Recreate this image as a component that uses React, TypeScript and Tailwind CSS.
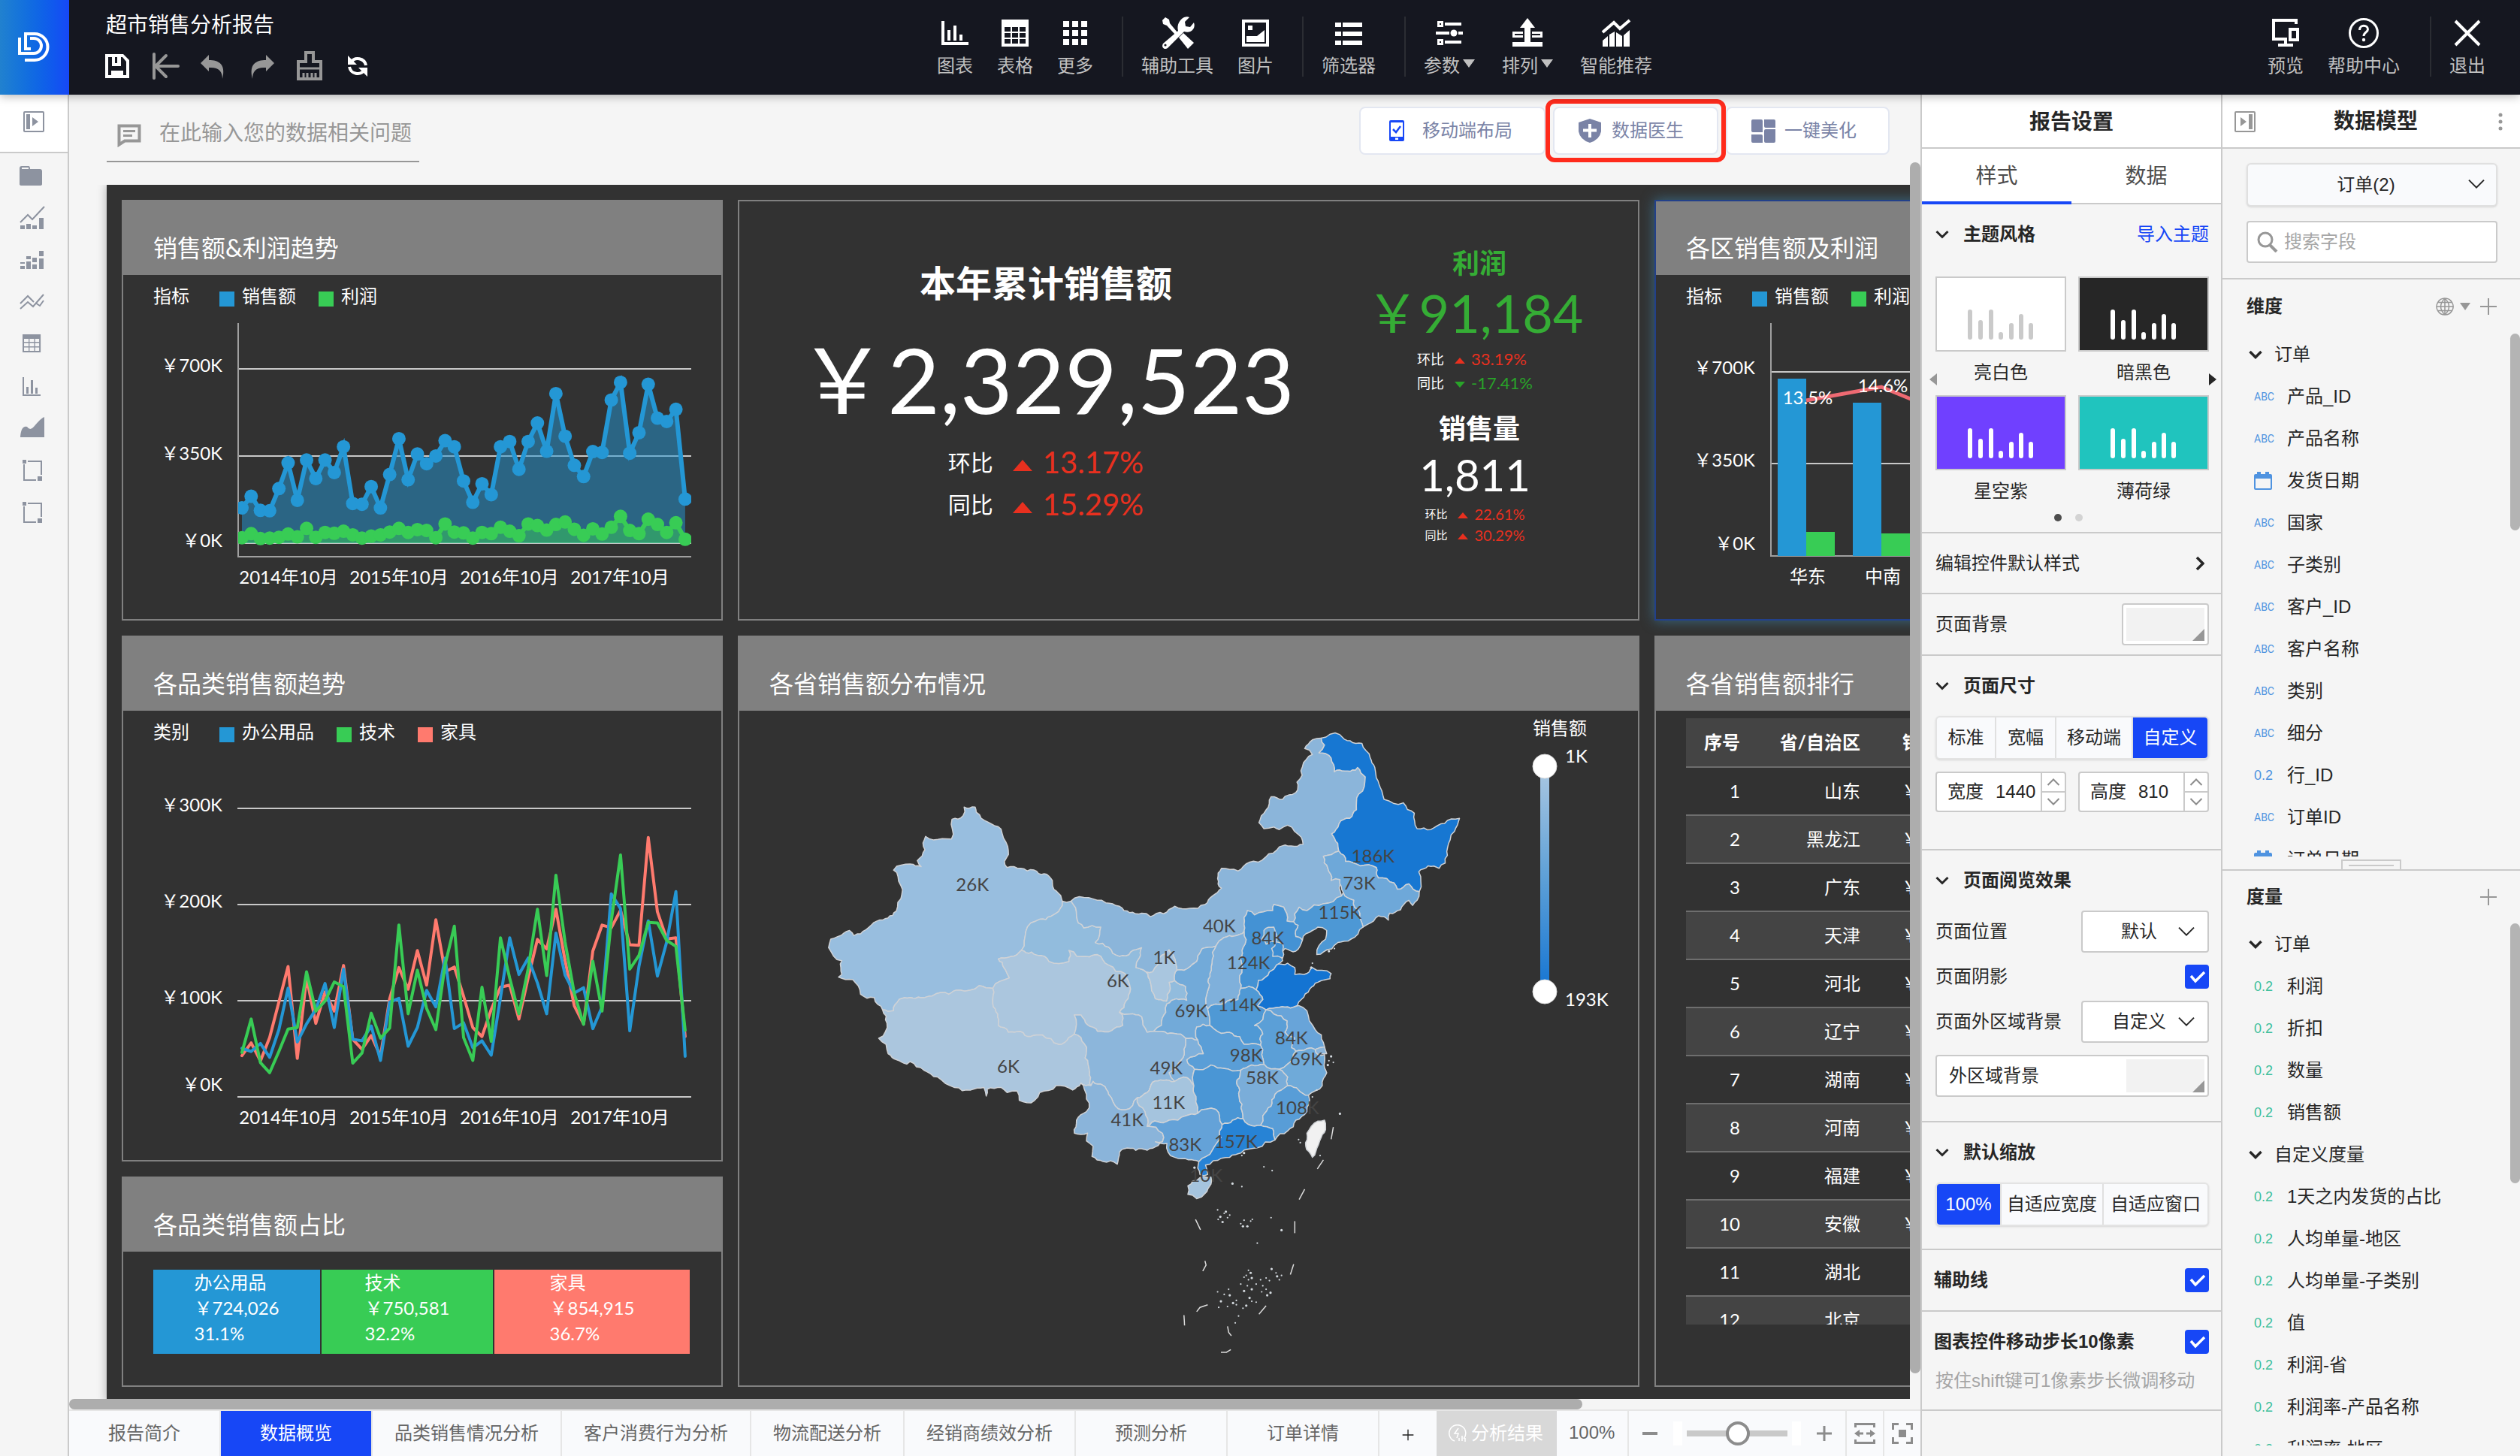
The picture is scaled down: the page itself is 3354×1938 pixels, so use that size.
import { useState, type ReactNode } from 'react';
import clsx from 'clsx';

type Point = [number, number];

/* ---------- icons ---------- */

interface IconProps {
  children: ReactNode;
  className?: string;
  box?: string;
}

function Icon({ children, className = 'size-9', box = '0 0 36 36' }: IconProps) {
  return (
    <svg viewBox={box} className={clsx('shrink-0', className)} fill="currentColor" aria-hidden="true">
      {children}
    </svg>
  );
}

const stroke = (width: number) => ({ fill: 'none', stroke: 'currentColor', strokeWidth: width });

function Chevron({ className = 'w-[18px] h-3', width = 3 }: { className?: string; width?: number }) {
  return (
    <Icon className={className} box="0 0 18 12">
      <path d="M1.5 2 9 9.5 16.5 2" {...stroke(width)} />
    </Icon>
  );
}

const tableIcon = (
  <path fillRule="evenodd" d="M0 0h36v36H0zM4 10v6h8v-6zM14 10v6h8v-6zM24 10v6h8v-6zM4 18v6h8v-6zM14 18v6h8v-6zM24 18v6h8v-6zM4 26v6h8v-6zM14 26v6h8v-6zM24 26v6h8v-6z" />
);

const chartIcon = <path d="M0 2h4v28h32v4H0zM8 14h4v14H8zM16 8h4v20h-4zM24 20h4v8h-4z" />;

const frameIcon = (
  <>
    <path d="M7 10v21h16M12 6h18v18" {...stroke(2)} />
    <path d="M5 4h5v5H5zM25 26h6v6h-6z" />
  </>
);

const plusIcon = <path d="M1 12h22M12 1v22" {...stroke(2)} />;

/* ---------- header ---------- */

const historyTools = [
  {
    label: '保存',
    white: true,
    icon: <path fillRule="evenodd" d="M2 2h24l8 8v24H2zM6 6v24h4v-6h16v6h4V12l-5-6h-2v12H11V6zM15 6v8h3V6z" />,
  },
  { label: '重置', icon: <path d="M3 2v32M19 4 5 18l14 14M5 18h30" {...stroke(4)} strokeLinecap="round" /> },
  { label: '撤销', icon: <path d="M1 14 12 3v7c13 0 23 5 18 25 0-10-5-16-18-15v5z" /> },
  { label: '重做', icon: <path d="M35 14 24 3v7C11 10 1 15 6 35c0-10 5-16 18-15v5z" /> },
  {
    label: '清除',
    icon: (
      <>
        <path d="M13 0h10v12h10v23H3V12h10z" {...stroke(4)} />
        <path d="M3 21h30M10 27v8M15 27v8M21 27v8M26 27v8" {...stroke(3)} />
      </>
    ),
  },
  {
    label: '刷新',
    white: true,
    icon: (
      <>
        <path d="M9 13a11 11 0 0 1 20 4M27 23A11 11 0 0 1 7 19" {...stroke(4)} />
        <path d="M5 4v12h12zM31 32V20H19z" />
      </>
    ),
  },
];

const toolGroups = [
  [
    { label: '图表', icon: chartIcon },
    { label: '表格', icon: tableIcon },
    {
      label: '更多',
      icon: (
        <path d="M2 2h8v8H2zM14 2h8v8h-8zM26 2h8v8h-8zM2 14h8v8H2zM14 14h8v8h-8zM26 14h8v8h-8zM2 26h8v8H2zM14 26h8v8h-8zM26 26h8v8h-8z" />
      ),
    },
  ],
  [
    {
      label: '辅助工具',
      icon: (
        <>
          <path d="M-2 1 2-3 7 0l1 5 10 12-3 3L4 8-1 6z" />
          <path d="M20 24l6-6 14 13-8 8z" />
          <path d="M27-3c3-1 5-1 7 0l-6 6 1 6 6 1 5-6c3 8-4 15-13 12L5 38c-4 3-9-1-6-6l20-17c-2-8 2-15 8-18z" />
          <circle cx="2" cy="34" r="1.6" fill="#151720" />
        </>
      ),
    },
    {
      label: '图片',
      icon: <path fillRule="evenodd" d="M0 0h36v36H0zM4 4v28h28V4zM8 8h6v6H8zM6 22h14l10-8v16H6z" />,
    },
  ],
  [
    {
      label: '筛选器',
      icon: <path d="M0 4h8v6H0zM10 4h26v6H10zM0 16h8v6H0zM10 16h26v6H10zM0 28h8v6H0zM10 28h26v6H10z" />,
    },
  ],
  [
    {
      label: '参数',
      menu: true,
      icon: (
        <>
          <path d="M3.500 3.500h5v5h-5zM3.500 27.500h5v5h-5z" {...stroke(3)} />
          <path d="M12 4h22v4H12zM12 28h22v4H12zM0 16h18v4H0zM30 16h6v4h-6z" />
          <circle cx="24" cy="18" r="4.500" />
        </>
      ),
    },
    {
      label: '排列',
      menu: true,
      icon: <path fillRule="evenodd" d="M18-2 28 11h-6v19h16v6H-2v-6h16V11H8zM-2 16h14v8H-2zM1 19v2h11v-2zM24 16h14v8H24zM24 19v2h11v-2z" />,
    },
    {
      label: '智能推荐',
      icon: (
        <>
          <path d="M0 17 15 4l8 8L36 1" {...stroke(4)} />
          <path d="M0 28l7-6v14H0zM9 20l7-4v20H9zM18 17l8 5v14h-8zM28 21l8-7v22h-8z" />
        </>
      ),
    },
  ],
];

function ToolButton({ label, icon, menu }: { label: string; icon: ReactNode; menu?: boolean }) {
  return (
    <button type="button" className="flex flex-col items-center gap-2 text-2xl leading-9">
      <Icon className="size-9 overflow-visible text-white">{icon}</Icon>
      <span className="flex gap-1">
        {label}
        {menu && (
          <Icon className="mt-2 h-3 w-4" box="0 0 16 12">
            <path d="M0 1h16L8 12z" />
          </Icon>
        )}
      </span>
    </button>
  );
}

function Header() {
  return (
    <header className="z-20 flex h-[126px] shrink-0 bg-[#151720] text-[#c0c0c0] shadow-[0_2px_12px_rgba(0,0,0,0.3)]">
      <a href="#home" aria-label="首页" className="grid w-[92px] place-items-center bg-linear-to-r from-[#2181cf] to-[#1747f6] text-white">
        <Icon className="mr-1 size-11" box="0 0 44 44">
          <path d="M4 9v21h19a10 10 0 0 0 0-20h-5M12 26V4h12a17.500 17.500 0 0 1 0 35H11M10 24h9" {...stroke(4)} />
        </Icon>
      </a>
      <div className="grid flex-1 grid-cols-[1fr_auto_1fr]">
        <div className="pt-3.5 pl-[46px]">
          <h1 className="pl-[3px] text-[28px] leading-10 text-white">超市销售分析报告</h1>
          <div className="mt-4 flex gap-7">
            {historyTools.map((tool) => (
              <button key={tool.label} type="button" aria-label={tool.label} className={tool.white ? 'text-white' : 'text-[#979797]'}>
                <Icon className="size-9 overflow-visible">{tool.icon}</Icon>
              </button>
            ))}
          </div>
        </div>
        <nav className="flex pt-[22px]">
          {toolGroups.map((group, i) => (
            <div
              key={i}
              className={clsx(
                'flex h-20 pt-1',
                i === 3 ? 'gap-9' : 'gap-8 border-r-2 border-[#2b2d33] pr-[38px]',
                i > 0 && 'pl-6',
              )}
            >
              {group.map((tool) => (
                <ToolButton key={tool.label} {...tool} />
              ))}
            </div>
          ))}
        </nav>
        <div className="flex justify-end gap-8 pt-[22px] pr-[46px]">
          <div className="flex h-20 gap-8 border-r-2 border-[#2b2d33] pt-1 pr-10">
            <ToolButton
              label="预览"
              icon={
                <>
                  <path d="M32 6V1H2v25h18M18 26v8M8 34h20" {...stroke(4)} />
                  <path d="M24 13h10v14H24z" {...stroke(4)} />
                </>
              }
            />
            <ToolButton
              label="帮助中心"
              icon={
                <>
                  <circle cx="18" cy="18" r="18.500" {...stroke(3)} />
                  <path d="M12.500 14c0-8 11-7 11-1 0 4-5.500 4-5.500 9" {...stroke(3)} />
                  <circle cx="18" cy="27" r="2.200" />
                </>
              }
            />
          </div>
          <div className="-ml-2 pt-1">
            <ToolButton label="退出" icon={<path d="M2 2l32 32M34 2 2 34" {...stroke(4)} />} />
          </div>
        </div>
      </div>
    </header>
  );
}

/* ---------- left rail ---------- */

const railItems = [
  { label: '文件夹', icon: <path fillRule="evenodd" d="M1 8q0-3 3-3h9q2 0 2 4h13q3 0 3 3v17q0 2-3 2H4q-3 0-3-2zM4 7v2h9V7z" /> },
  {
    label: '组合图',
    icon: (
      <>
        <path d="M2 24 12 14l6 6L34 3" {...stroke(2)} />
        <path d="M2 28h6v5H2zM10 26h6v7h-6zM18 28h6v5h-6zM27 18h6v15h-6z" />
      </>
    ),
  },
  { label: '堆积图', icon: <path d="M2 21h6v2H2zM2 26h6v4H2zM10 13h6v4h-6zM10 20h6v10h-6zM18 15h6v6h-6zM18 24h6v6h-6zM27 6h6v7h-6zM27 16h6v14h-6z" /> },
  { label: '折线图', icon: <path d="M2 20 12 10l8 8M2 27l10-9 7 6L33 8M22 19l6 4 5-7" {...stroke(2)} /> },
  {
    label: '表格',
    icon: (
      <g transform="translate(5 5) scale(.67)">
        <path fillRule="evenodd" d="M0 0h36v36H0zM3 9v6h9v-6zM14 9v6h9v-6zM25 9v6h8v-6zM3 17v7h9v-7zM14 17v7h9v-7zM25 17v7h8v-7zM3 26v7h9v-7zM14 26v7h9v-7zM25 26v7h8v-7z" />
      </g>
    ),
  },
  { label: '柱图', icon: <path d="M5 6h2v23h22v2H5zM10 19h3v9h-3zM16 10h3v18h-3zM22 20h3v8h-3z" /> },
  { label: '面积图', icon: <path d="M2 30q1-16 9-14 4 6 9 0Q30 4 34 3v27z" /> },
  { label: '容器', icon: frameIcon },
  { label: '选择框', icon: frameIcon },
];

function PanelToggle({ side }: { side: 'left' | 'right' }) {
  return (
    <Icon className="size-7" box="0 0 28 28">
      <rect x="1" y="1" width="26" height="26" rx="1" {...stroke(2)} />
      <path d={side === 'left' ? 'M4 4h5v20H4zM12 8l8 6-8 6z' : 'M19 4h5v20h-5zM8 8l8 6-8 6z'} />
    </Icon>
  );
}

function Rail() {
  return (
    <aside className="flex w-[92px] shrink-0 flex-col border-r-2 border-[#cacaca] text-[#8d93a0]">
      <button type="button" aria-label="展开侧栏" className="grid h-[78px] place-items-center border-b-2 border-[#cacaca] bg-white pb-1">
        <PanelToggle side="left" />
      </button>
      {railItems.map((item) => (
        <button key={item.label} type="button" aria-label={item.label} className="grid h-14 place-items-center pt-1 pr-1">
          <Icon>{item.icon}</Icon>
        </button>
      ))}
    </aside>
  );
}

/* ---------- canvas widgets ---------- */

function Widget({ title, selected, className, children }: { title?: string; selected?: boolean; className: string; children: ReactNode }) {
  return (
    <section
      className={clsx(
        'overflow-hidden border-2',
        selected ? 'border-[#22408a] shadow-[0_0_16px_rgba(60,120,150,0.8)]' : 'border-[#808080]',
        className,
      )}
    >
      {title && <h2 className="h-[98px] bg-[#808080] pt-[42px] pl-10 text-[32px] leading-10">{title}</h2>}
      {children}
    </section>
  );
}

function Legend({ name, items }: { name: string; items: { label: string; color: string }[] }) {
  return (
    <div className="mt-2.5 mb-0.5 flex h-9 items-center gap-[30px] pl-10 text-2xl leading-9">
      <span className="mr-2.5">{name}</span>
      {items.map((item) => (
        <span key={item.label} className="flex items-center gap-2.5">
          <i className={clsx('mt-2 size-5', item.color)} />
          {item.label}
        </span>
      ))}
    </div>
  );
}

const BLUE = '#2497d5';
const GREEN = '#38cc55';
const RED = '#ff7a6e';

const salesY = [
  1262, 1233, 1268, 1269, 1214, 1150, 1243, 1143, 1189, 1143, 1174, 1110, 1251, 1253, 1209, 1262, 1179, 1090, 1192, 1128, 1152, 1133,
  1095, 1110, 1195, 1248, 1202, 1229, 1110, 1097, 1166, 1097, 1051, 1121, 978, 1084, 1156, 1184, 1122, 1124, 994, 950, 1126, 1075, 955,
  1039, 1047, 1017, 1240,
];
const profitY = [
  1336, 1326, 1338, 1337, 1335, 1327, 1334, 1313, 1335, 1323, 1325, 1320, 1329, 1337, 1332, 1329, 1322, 1313, 1323, 1316, 1318, 1336,
  1302, 1322, 1324, 1337, 1323, 1326, 1310, 1320, 1331, 1302, 1306, 1317, 1303, 1297, 1315, 1330, 1314, 1327, 1310, 1283, 1318, 1326,
  1290, 1303, 1323, 1299, 1340,
];
const officeY = [
  800, 806, 791, 817, 765, 687, 788, 754, 727, 678, 761, 651, 783, 786, 758, 823, 713, 706, 796, 761, 691, 722, 630, 763, 752, 799, 786,
  813, 705, 592, 661, 630, 677, 735, 583, 662, 696, 686, 763, 722, 509, 537, 767, 645, 560, 664, 600, 505, 815,
];
const furnitureY = [
  814, 790, 824, 780, 713, 646, 819, 667, 753, 694, 730, 644, 783, 802, 776, 815, 707, 648, 689, 616, 681, 558, 656, 647, 702, 761, 778,
  727, 685, 681, 745, 667, 595, 613, 538, 635, 720, 754, 617, 568, 573, 540, 605, 606, 403, 543, 594, 592, 778,
];
const techY = [
  808, 745, 827, 846, 806, 764, 761, 656, 730, 711, 675, 684, 828, 809, 734, 781, 762, 568, 735, 653, 725, 765, 643, 570, 780, 823, 685,
  787, 592, 668, 735, 650, 538, 663, 474, 600, 697, 755, 636, 730, 560, 436, 651, 625, 563, 564, 597, 608, 766,
];

// month index and plot height -> chart coordinates
const toPoints = (ys: number[], scale: number, offset: number): Point[] =>
  ys.map((y, i) => [158 + i * 12.29, y * scale + offset]);

const join = (points: Point[]) => points.map(([x, y]) => `${x.toFixed(1)},${y.toFixed(1)}`).join(' ');

const YEARS = [
  { label: '2014年10月', x: 220 },
  { label: '2015年10月', x: 367 },
  { label: '2016年10月', x: 514 },
  { label: '2017年10月', x: 661 },
];

function AxisLabels({ ticks, baseline }: { ticks: { label: string; y: number }[]; baseline: number }) {
  return (
    <g fill="#fff" fontSize="24">
      {ticks.map((t) => (
        <text key={t.label} x="132" y={t.y} textAnchor="end">
          {t.label}
        </text>
      ))}
      {YEARS.map((t) => (
        <text key={t.label} x={t.x} y={baseline} textAnchor="middle">
          {t.label}
        </text>
      ))}
    </g>
  );
}

function TrendChart() {
  const sales = toPoints(salesY, 0.5357, -366);
  const profit = toPoints(profitY, 0.5357, -366);
  return (
    <svg viewBox="0 48 796 410" className="h-[410px] w-[796px]">
      <clipPath id="trend-plot">
        <rect x="153" y="60" width="603" height="320" />
      </clipPath>
      <path d="M152 125h604M152 241h604M152 357h604" stroke="#c8c8c8" strokeWidth="2" />
      <path d="M153 64v311h603" stroke="#a0a0a0" strokeWidth="2" fill="none" />
      <g clipPath="url(#trend-plot)">
        <polygon points={`158,357 ${join(sales)} 748,357`} fill={BLUE} fillOpacity="0.5" />
        <polyline points={join(sales)} fill="none" stroke={BLUE} strokeWidth="6" />
        {sales.map(([x, y]) => (
          <circle key={x} cx={x} cy={y} r="9" fill={BLUE} />
        ))}
        <polygon points={`158,357 ${join(profit)} 748,357`} fill={GREEN} fillOpacity="0.5" />
        <polyline points={join(profit)} fill="none" stroke={GREEN} strokeWidth="6" />
        {profit.map(([x, y]) => (
          <circle key={x} cx={x} cy={y} r="9" fill={GREEN} />
        ))}
      </g>
      <AxisLabels
        ticks={[
          { label: '￥700K', y: 129 },
          { label: '￥350K', y: 246 },
          { label: '￥0K', y: 362 },
        ]}
        baseline={411}
      />
    </svg>
  );
}

function CategoryChart() {
  return (
    <svg viewBox="0 48 796 550" className="h-[550px] w-[796px]">
      <path d="M152 130h604M152 258h604M152 386h604M152 514h604" stroke="#c8c8c8" strokeWidth="2" />
      <g fill="none" strokeWidth="4" strokeLinejoin="round" strokeLinecap="round">
        <polyline points={join(toPoints(furnitureY, 0.7066, -116))} stroke={RED} />
        <polyline points={join(toPoints(officeY, 0.7066, -116))} stroke={BLUE} />
        <polyline points={join(toPoints(techY, 0.7066, -116))} stroke={GREEN} />
      </g>
      <AxisLabels
        ticks={[
          { label: '￥300K', y: 134 },
          { label: '￥200K', y: 262 },
          { label: '￥100K', y: 390 },
          { label: '￥0K', y: 506 },
        ]}
        baseline={550}
      />
    </svg>
  );
}

const regions = [
  { label: '华东', x: 162, sales: 504, profit: 708 },
  { label: '中南', x: 262, sales: 536, profit: 710 },
];

function RegionChart() {
  return (
    <svg viewBox="0 48 796 410" className="h-[410px] w-[796px]">
      <path d="M153 129h604M153 251h604" stroke="#c8c8c8" strokeWidth="2" />
      <path d="M153 64v310h603" stroke="#a0a0a0" strokeWidth="2" fill="none" />
      {regions.map((r) => (
        <g key={r.label}>
          <rect x={r.x} y={r.sales - 366} width="38" height={740 - r.sales} fill={BLUE} />
          <rect x={r.x + 38} y={r.profit - 366} width="38" height={740 - r.profit} fill={GREEN} />
          <text x={r.x + 40} y="410" fill="#fff" fontSize="24" textAnchor="middle">
            {r.label}
          </text>
        </g>
      ))}
      <polyline points="200,167 300,149 400,190 500,140" fill="none" stroke="#ee6a72" strokeWidth="5" />
      <g fill="#fff" fontSize="24">
        <text x="202" y="172" textAnchor="middle">13.5%</text>
        <text x="302" y="156" textAnchor="middle">14.6%</text>
        <text x="132" y="132" textAnchor="end">￥700K</text>
        <text x="132" y="255" textAnchor="end">￥350K</text>
        <text x="132" y="366" textAnchor="end">￥0K</text>
      </g>
    </svg>
  );
}

function Change({ label, value, size, down }: { label: string; value: string; size: 'lg' | 'md' | 'sm'; down?: boolean }) {
  return (
    <div
      className={clsx(
        'flex items-center',
        size === 'lg' && 'h-14 text-[40px] leading-[56px]',
        size === 'md' && 'h-8 text-[22px] leading-8',
        size === 'sm' && 'h-7 text-xl leading-7',
      )}
    >
      <span
        className={clsx(
          size === 'lg' && 'mr-[26px] text-[30px]',
          size === 'md' && 'mr-3.5 text-lg',
          size === 'sm' && 'mr-3.5 text-[15px]',
        )}
      >
        {label}
      </span>
      <Icon
        className={clsx(
          down ? 'rotate-180 text-[#29a329]' : 'text-[#e8301f]',
          size === 'lg' ? 'mt-2 mr-3.5 h-[15px] w-[26px]' : 'mt-1 mr-2 h-2 w-3.5',
        )}
        box="0 0 26 15"
      >
        <path d="M13 0 26 15H0z" />
      </Icon>
      <span className={down ? 'text-[#29a329]' : 'text-[#e8301f]'}>{value}</span>
    </div>
  );
}

function KpiBoard() {
  return (
    <div className="flex pr-[42px] text-center">
      <div className="flex w-[816px] flex-col items-center pt-[79px]">
        <h2 className="text-5xl leading-[60px] font-semibold">本年累计销售额</h2>
        <p className="mt-7 text-[120px] leading-[140px]">￥2,329,523</p>
        <div className="mt-3">
          <Change label="环比" value="13.17%" size="lg" />
          <Change label="同比" value="15.29%" size="lg" />
        </div>
      </div>
      <div className="flex flex-1 flex-col items-center pt-[60px]">
        <h2 className="text-4xl leading-[44px] font-semibold text-[#35ad35]">利润</h2>
        <p className="mt-1 pr-3 text-[70px] leading-20 text-[#35ad35]">￥91,184</p>
        <div className="mt-1.5 pr-3">
          <Change label="环比" value="33.19%" size="md" />
          <Change label="同比" value="-17.41%" size="md" down />
        </div>
        <h2 className="mt-[22px] text-4xl leading-[44px] font-semibold">销售量</h2>
        <p className="mt-1 pr-3 text-[58px] leading-[72px]">1,811</p>
        <div className="mt-0.5 pr-3">
          <Change label="环比" value="22.61%" size="sm" />
          <Change label="同比" value="30.29%" size="sm" />
        </div>
      </div>
    </div>
  );
}

/* province outlines, drawn on a 1568 unit grid */
const provinces: { name: string; fill: string; d: string }[] = [
  {
    name: '新疆',
    fill: '#98bedf',
    d: '72,560 76,540 100,526 110,520 118,532 140,518 160,498 195,475 205,436 198,395 190,380 220,366 240,372 233,358 248,302 262,310 295,308 296,262 316,254 318,234 338,234 340,246 385,285 397,325 391,360 396,374 445,380 478,404 496,452 492,470 455,494 430,522 422,566 380,586 390,606 400,630 370,654 345,648 310,658 290,668 260,672 240,676 200,680 190,706 170,704 155,676 130,668 116,634 90,628 96,622 96,590',
  },
  {
    name: '西藏',
    fill: '#abc6de',
    d: '200,680 240,676 260,672 290,668 310,658 345,648 370,654 370,690 380,740 420,754 460,762 490,784 500,780 518,760 530,768 540,800 543,830 548,880 530,874 515,890 485,880 455,896 446,914 418,914 414,892 396,896 385,884 360,888 358,904 354,884 330,890 300,884 270,860 245,844 220,824 214,830 180,806 163,770 175,755 178,735 170,704 190,706',
  },
  {
    name: '青海',
    fill: '#abc6de',
    d: '380,586 422,566 440,570 464,580 472,592 508,592 508,566 540,580 560,576 580,600 610,620 620,656 600,710 606,740 586,752 560,754 530,716 518,716 518,760 500,780 490,784 460,762 420,754 380,740 370,690 370,654 400,630 390,606',
  },
  {
    name: '甘肃',
    fill: '#92bcdd',
    d: '492,470 496,452 512,452 522,486 535,514 566,512 564,530 556,548 600,580 640,560 636,584 630,606 648,616 656,640 665,678 685,684 692,655 690,640 700,636 720,650 722,682 686,690 684,710 676,740 662,754 650,756 640,720 618,714 600,710 620,656 610,620 580,600 560,576 540,580 508,566 508,592 472,592 464,580 440,570 422,566 430,522 455,494',
  },
  {
    name: '内蒙古',
    fill: '#8bb5da',
    d: '512,452 575,456 600,464 640,480 656,488 700,464 755,460 785,422 778,400 785,376 815,382 835,362 865,350 890,326 933,320 930,304 905,276 890,286 880,280 862,284 853,270 875,210 896,216 920,200 922,176 932,140 950,112 936,98 950,78 966,74 972,90 962,108 984,120 990,152 1028,148 1032,142 1046,164 1034,204 1030,240 1018,260 985,296 996,318 998,336 970,348 978,376 984,404 1000,402 1003,440 970,458 940,474 926,466 916,500 904,498 898,466 880,460 878,474 845,484 832,474 826,490 826,522 790,536 775,556 750,562 728,604 704,612 690,565 676,578 660,616 648,616 630,606 636,584 640,560 600,580 556,548 564,530 566,512 535,514 522,486',
  },
  {
    name: '黑龙江',
    fill: '#1777d2',
    d: '966,74 1000,66 1040,86 1055,120 1066,166 1076,196 1080,216 1115,224 1135,248 1140,284 1165,286 1190,272 1217,260 1208,290 1200,310 1195,346 1180,376 1160,370 1143,384 1144,430 1125,412 1104,424 1098,410 1070,398 1066,374 1010,360 998,336 996,318 985,296 1018,260 1030,240 1034,204 1046,164 1032,142 1028,148 990,152 984,120 962,108 972,90',
  },
  {
    name: '吉林',
    fill: '#6ea8d9',
    d: '970,348 998,336 1010,360 1066,374 1070,398 1098,410 1104,424 1125,412 1144,430 1140,450 1132,462 1125,450 1110,472 1090,480 1088,496 1070,486 1050,506 1042,512 1036,480 1025,450 1006,432 1000,402 984,404 978,376',
  },
  {
    name: '辽宁',
    fill: '#4d98d5',
    d: '1003,440 1006,432 1025,450 1036,480 1042,512 1020,540 996,548 970,570 958,576 974,540 976,520 960,512 950,520 932,542 920,534 924,508 916,500 926,466 940,474 970,458',
  },
  {
    name: '河北',
    fill: '#4492d4',
    d: '832,474 845,484 878,474 880,460 898,466 904,498 916,500 924,508 920,534 932,542 920,568 900,562 896,590 885,600 872,616 852,636 848,658 820,654 818,640 822,610 824,560 826,522 826,490',
  },
  { name: '北京', fill: '#68a5d9', d: '862,520 880,512 885,530 884,546 866,552 858,540' },
  { name: '天津', fill: '#3c8dd4', d: '884,546 896,550 896,584 878,580 876,562' },
  {
    name: '山东',
    fill: '#1474d2',
    d: '852,636 872,616 885,600 905,596 918,606 918,622 935,622 950,606 984,620 982,632 960,640 945,656 930,680 910,700 890,698 866,704 850,696 860,680 848,658',
  },
  { name: '山西', fill: '#7fb0db', d: '775,556 790,536 826,522 824,560 822,610 818,640 820,654 815,680 790,690 760,702 758,670 764,620' },
  {
    name: '陕西',
    fill: '#72aad9',
    d: '750,562 775,556 764,620 758,670 760,702 764,740 740,744 742,774 720,770 676,754 662,754 676,740 684,710 686,690 722,682 720,650 700,636 704,612 728,604',
  },
  { name: '宁夏', fill: '#a9c6df', d: '676,578 690,565 704,612 700,636 690,640 692,655 685,684 665,678 656,640 648,616 660,616' },
  {
    name: '河南',
    fill: '#4f99d5',
    d: '760,702 790,690 815,680 820,654 848,658 860,680 850,696 866,704 845,740 860,760 856,786 826,784 818,766 780,756 764,740',
  },
  {
    name: '江苏',
    fill: '#68a4d9',
    d: '866,704 890,698 910,700 925,694 940,706 955,750 970,780 972,790 955,796 940,794 920,800 912,792 918,770 900,756 904,730 880,714',
  },
  {
    name: '安徽',
    fill: '#5b9fd7',
    d: '866,704 880,714 904,730 900,756 918,770 912,792 920,800 905,830 890,842 862,830 856,786 860,760 845,740',
  },
  { name: '上海', fill: '#8bb5da', d: '955,796 972,790 976,806 960,808' },
  {
    name: '浙江',
    fill: '#6faad9',
    d: '920,800 940,794 955,796 960,808 972,808 972,826 976,850 968,880 943,902 925,890 905,880 905,860 890,842 905,830',
  },
  {
    name: '湖北',
    fill: '#5a9ed7',
    d: '740,744 764,740 780,756 818,766 826,784 856,786 862,830 820,844 790,840 766,832 736,842 722,820 752,806 742,774',
  },
  { name: '重庆', fill: '#7fb0db', d: '720,770 742,774 752,806 722,820 736,842 735,880 716,860 700,870 690,850 712,820' },
  {
    name: '四川',
    fill: '#8cb6db',
    d: '518,716 530,716 560,754 586,752 606,740 600,710 618,714 640,720 650,756 662,754 676,754 720,770 712,820 690,850 700,870 660,872 650,896 632,908 610,936 598,934 580,900 552,870 548,880 543,830 540,800 530,768 518,760',
  },
  { name: '贵州', fill: '#a5c4de', d: '660,872 700,870 716,860 735,880 742,930 742,944 720,950 690,960 650,974 646,940 632,908 650,896' },
  {
    name: '云南',
    fill: '#8ab4da',
    d: '530,874 548,880 552,870 580,900 598,934 610,936 632,908 646,940 650,974 678,990 678,1010 640,1026 600,1034 596,1062 570,1056 550,1044 552,1020 540,1008 542,990 518,990 522,960 540,940 540,900',
  },
  { name: '湖南', fill: '#4a96d5', d: '736,842 766,832 790,840 820,844 818,890 824,956 805,960 786,970 775,935 742,944 742,930 735,880' },
  { name: '江西', fill: '#7aadd9', d: '820,844 862,830 890,842 905,860 905,880 882,900 860,950 856,972 834,970 824,956 818,890' },
  { name: '福建', fill: '#589dd7', d: '882,900 905,880 925,890 943,902 940,940 920,960 905,985 882,1006 878,980 856,972 860,950' },
  {
    name: '广东',
    fill: '#2783d5',
    d: '786,970 805,960 824,956 834,970 856,972 878,980 882,1006 850,1024 820,1036 800,1046 770,1054 756,1064 760,1086 746,1086 744,1056 768,1030 784,1000',
  },
  {
    name: '广西',
    fill: '#64a2d8',
    d: '650,974 690,960 720,950 742,944 775,935 786,970 784,1000 768,1030 744,1056 725,1052 700,1046 688,1034 686,1014 665,1010 678,1010 678,990',
  },
  { name: '海南', fill: '#a5c4de', d: '745,1094 766,1092 766,1108 755,1130 740,1142 724,1132 724,1112' },
  { name: '台湾', fill: '#f1f1f1', d: '972,960 974,975 966,1000 956,1034 950,1046 938,1020 940,990 960,962' },
];

const mapLabels: { text: string; at: Point }[] = [
  { text: '26K', at: [333, 415] },
  { text: '40K', at: [781, 511] },
  { text: '1K', at: [681, 584] },
  { text: '6K', at: [597, 638] },
  { text: '84K', at: [869, 539] },
  { text: '124K', at: [834, 596] },
  { text: '69K', at: [730, 707] },
  { text: '114K', at: [818, 693] },
  { text: '186K', at: [1060, 349] },
  { text: '73K', at: [1035, 411] },
  { text: '115K', at: [1000, 479] },
  { text: '6K', at: [398, 836] },
  { text: '49K', at: [685, 839] },
  { text: '98K', at: [830, 810] },
  { text: '84K', at: [912, 770] },
  { text: '69K', at: [939, 819] },
  { text: '58K', at: [859, 862] },
  { text: '11K', at: [689, 919] },
  { text: '41K', at: [614, 960] },
  { text: '83K', at: [719, 1017] },
  { text: '157K', at: [811, 1010] },
  { text: '108K', at: [923, 932] },
  { text: '10K', at: [757, 1088] },
];

const seaDashes = [
  '988,976 984,1004', '970,1052 959,1073', '936,1120 926,1144', '918,1194 918,1222', '738,1190 747,1214', '755,1286 757,1296 751,1310',
  '916,1294 910,1318', '866,1390 853,1410', '717,1412 718,1436', '784,1498 794,1498 802,1492', '740,1404 746,1394 760,1388', '796,1438 798,1452 803,1460',
];

const islets =
  '1000,945 862,1068 877,1077 805,1107 822,1114 875,1186 894,1215 850,1245 778,1168 783,1184 790,1176 796,1186 787,1196 779,1190 800,1180 793,1172 820,1200 826,1192 832,1206 838,1194 841,1190 824,1206 834,1308 830,1320 838,1314 834,1330 826,1324 840,1326 820,1340 832,1344 840,1352 856,1330 872,1332 886,1322 894,1320 884,1314 876,1305 860,1344 866,1352 874,1360 858,1358 798,1352 800,1366 790,1364 778,1358 784,1380 780,1394 796,1392 806,1384 812,1388 824,1396 830,1390 840,1380 848,1382 836,1372 866,1326 890,1330 868,1366 848,1340 812,1378 826,1356 816,1414 810,1430 984,812 980,822 988,826 978,832 958,890 950,906 980,568 990,562 950,596 948,606 925,1005 928,1012 826,1036 822,1042 964,1042 736,1070';

const parse = (d: string): Point[] => d.split(' ').map((p) => p.split(',').map(Number) as Point);

const toMap = ([x, y]: Point): Point => [x * 0.7334 + 66, y * 0.574 - 6];

// Breaks an edge into a jagged coast line. The offset depends only on the two
// end points, so neighbouring provinces keep the same border.
function jag(a: Point, b: Point): Point[] {
  const length = Math.hypot(b[0] - a[0], b[1] - a[1]);
  if (length < 7) return [b];
  const seed = Math.sin((a[0] + b[0]) * 12.99 + (a[1] + b[1]) * 78.23) * 43758.55;
  const shift = (seed - Math.floor(seed) - 0.5) * 0.34;
  const side = a[0] < b[0] || (a[0] === b[0] && a[1] < b[1]) ? 1 : -1;
  const mid: Point = [
    (a[0] + b[0]) / 2 - (b[1] - a[1]) * shift * side,
    (a[1] + b[1]) / 2 + (b[0] - a[0]) * shift * side,
  ];
  return [...jag(a, mid), ...jag(mid, b)];
}

function outline(d: string) {
  const points = parse(d).map(toMap);
  return join(points.flatMap((p, i) => jag(p, points[(i + 1) % points.length])));
}

function ProvinceMap() {
  return (
    <svg viewBox="0 0 1196 896" className="h-[896px] w-[1196px]">
      <defs>
        <linearGradient id="sales-scale" x1="0" y1="0" x2="0" y2="1">
          <stop offset="0" stopColor="#abc8e1" />
          <stop offset="0.500" stopColor="#5c9fd7" />
          <stop offset="1" stopColor="#1474d2" />
        </linearGradient>
      </defs>
      <g stroke="#cfd2d6" strokeWidth="1.500" strokeLinejoin="round">
        {provinces.map((p) => (
          <polygon key={p.name} points={outline(p.d)} fill={p.fill} />
        ))}
      </g>
      <g stroke="#dcdcdc" strokeWidth="1.500" fill="none">
        {seaDashes.map((d) => (
          <polyline key={d} points={join(parse(d).map(toMap))} />
        ))}
      </g>
      {parse(islets).map((p, i) => {
        const [x, y] = toMap(p);
        return <circle key={i} cx={x} cy={y} r={i % 3 === 0 ? 1.6 : 1.1} fill="#d5dbe0" />;
      })}
      <g fill="#444" fontSize="24" textAnchor="middle">
        {mapLabels.map(({ text, at }) => {
          const [x, y] = toMap(at);
          return (
            <text key={text + at[0]} x={x} y={y + 8}>
              {text}
            </text>
          );
        })}
      </g>
      <g fill="#fff" fontSize="24">
        <text x="1056" y="32">销售额</text>
        <text x="1099" y="69">1K</text>
        <text x="1099" y="393">193K</text>
      </g>
      <rect x="1066" y="75" width="12" height="300" fill="url(#sales-scale)" />
      <g fill="#fff" stroke="#dedede">
        <circle cx="1072" cy="74" r="16" />
        <circle cx="1072" cy="374" r="16" />
      </g>
    </svg>
  );
}

const ranking = [
  ['山东', '￥193,112'], ['黑龙江', '￥186,215'], ['广东', '￥157,408'], ['天津', '￥131,620'], ['河北', '￥124,339'], ['辽宁', '￥115,473'],
  ['湖南', '￥114,982'], ['河南', '￥114,105'], ['福建', '￥108,266'], ['安徽', '￥102,517'], ['湖北', '￥98,231'], ['北京', '￥84,704'],
];

function RankingTable() {
  return (
    <div className="mt-2.5 ml-10 h-[807px] w-[720px] overflow-hidden">
      <table className="w-full table-fixed border-collapse text-right text-2xl leading-8">
        <colgroup>
          <col className="w-[92px]" />
          <col className="w-[160px]" />
          <col className="w-[168px]" />
          <col />
        </colgroup>
        <thead>
          <tr className="h-[65px] border-b-2 border-[#6e6e6e] bg-[#444]">
            <th className="pr-5">序号</th>
            <th className="pr-5">省/自治区</th>
            <th className="pl-9 text-left">销售额</th>
            <th />
          </tr>
        </thead>
        <tbody>
          {ranking.map(([name, amount], i) => (
            <tr key={name} className={clsx('h-16 border-b-2 border-[#6e6e6e]', i % 2 === 1 && 'bg-[#444]')}>
              <td className="pr-5">{i + 1}</td>
              <td className="pr-5">{name}</td>
              <td className="pr-5">{amount}</td>
              <td />
            </tr>
          ))}
        </tbody>
      </table>
    </div>
  );
}

const shares = [
  { label: '办公用品', amount: '￥724,026', percent: '31.1%', style: 'w-[222px] bg-[#2497d5]' },
  { label: '技术', amount: '￥750,581', percent: '32.2%', style: 'w-[228px] bg-[#38cc55]' },
  { label: '家具', amount: '￥854,915', percent: '36.7%', style: 'w-[260px] bg-[#ff7a6e]' },
];

function Dashboard() {
  return (
    <div className="flex h-[1620px] w-[2880px] gap-5 bg-[#323232] p-5 font-[Lato,'Noto_Sans_CJK_SC',sans-serif] text-white shadow-[0_0_12px_rgba(0,0,0,0.3)]">
      <div className="flex w-[800px] flex-col gap-5">
        <Widget title="销售额&利润趋势" className="h-[560px]">
          <Legend
            name="指标"
            items={[
              { label: '销售额', color: 'bg-[#2497d5]' },
              { label: '利润', color: 'bg-[#38cc55]' },
            ]}
          />
          <TrendChart />
        </Widget>
        <Widget title="各品类销售额趋势" className="h-[700px]">
          <Legend
            name="类别"
            items={[
              { label: '办公用品', color: 'bg-[#2497d5]' },
              { label: '技术', color: 'bg-[#38cc55]' },
              { label: '家具', color: 'bg-[#ff7a6e]' },
            ]}
          />
          <CategoryChart />
        </Widget>
        <Widget title="各品类销售额占比" className="h-[280px]">
          <div className="mt-6 ml-10 flex h-28 gap-0.5 text-2xl leading-[34px]">
            {shares.map((s) => (
              <div key={s.label} className={clsx('flex justify-center', s.style)}>
                <p>
                  {s.label}
                  <br />
                  {s.amount}
                  <br />
                  {s.percent}
                </p>
              </div>
            ))}
          </div>
        </Widget>
      </div>
      <div className="flex w-[1200px] flex-col gap-5">
        <Widget className="h-[560px]">
          <KpiBoard />
        </Widget>
        <Widget title="各省销售额分布情况" className="h-[1000px]">
          <ProvinceMap />
        </Widget>
      </div>
      <div className="flex w-[800px] flex-col gap-5">
        <Widget title="各区销售额及利润" selected className="h-[560px]">
          <Legend
            name="指标"
            items={[
              { label: '销售额', color: 'bg-[#2497d5]' },
              { label: '利润', color: 'bg-[#38cc55]' },
            ]}
          />
          <RegionChart />
        </Widget>
        <Widget title="各省销售额排行" className="h-[1000px]">
          <RankingTable />
        </Widget>
      </div>
    </div>
  );
}

/* ---------- workspace around the canvas ---------- */

const actionStyle = 'flex h-16 items-center rounded-lg border-2 border-[#e3e7f1] bg-white text-2xl leading-8 text-[#7a83a6]';

function ActionBar() {
  return (
    <div className="flex h-[120px] shrink-0 items-start justify-between pr-[41px] pl-[50px]">
      <label className="mt-5 flex h-[70px] w-[416px] items-center border-b-2 border-[#979797] pb-1 pl-3.5 text-[#979797]">
        <Icon className="mt-1 size-8" box="0 0 32 32">
          <path d="M2.500 3.500h27v20H10l-7.500 5z" {...stroke(4)} />
          <path d="M8 9h16v3H8zM8 15h12v3H8z" />
        </Icon>
        <input
          type="text"
          aria-label="数据问题"
          placeholder="在此输入您的数据相关问题"
          className="ml-6 w-[340px] bg-transparent text-[28px] leading-10 outline-none placeholder:text-[#979797]"
        />
      </label>
      <div className="mt-4 flex">
        <button type="button" className={clsx(actionStyle, 'w-[248px] pl-[38px]')}>
          <Icon className="mr-6 h-7 w-5 text-[#1747f6]" box="0 0 20 28">
            <path fillRule="evenodd" d="M2 0h16q2 0 2 2v24q0 2-2 2H2q-2 0-2-2V2q0-2 2-2zM2 3v19h16V3zM8 23.500v2.500h4v-2.500z" />
            <path d="M5 12l4 4 6-8" {...stroke(2.500)} />
          </Icon>
          移动端布局
        </button>
        <button type="button" className={clsx(actionStyle, 'relative mx-2.5 w-[220px] pl-8')}>
          <Icon className="mr-3.5 h-8 w-[30px]" box="0 0 30 32">
            <path fillRule="evenodd" d="M15 0 30 5v12q-2 11-15 15Q2 28 0 17V5zM13 7v6.500H6v4h7V25h4v-7.500h7v-4h-7V7z" />
          </Icon>
          数据医生
          <span className="absolute -inset-3 rounded-xl border-6 border-[#ff2b1c]" />
        </button>
        <button type="button" className={clsx(actionStyle, 'w-[218px] pl-8')}>
          <Icon className="mr-3 size-8" box="0 0 32 32">
            <path d="M2 1h11q2 0 2 2v15H2q-2 0-2-2V3q0-2 2-2zM17 1h13q2 0 2 2v9H19q-2 0-2-2zM0 21h13q2 0 2 2v9H2q-2 0-2-2zM19 14h13v16q0 2-2 2H19q-2 0-2-2V16q0-2 2-2z" />
          </Icon>
          一键美化
        </button>
      </div>
    </div>
  );
}

const pages = ['报告简介', '数据概览', '品类销售情况分析', '客户消费行为分析', '物流配送分析', '经销商绩效分析', '预测分析', '订单详情'];

function PageTabs() {
  const [page, setPage] = useState('数据概览');
  const [zoom, setZoom] = useState(51);

  return (
    <footer className="flex h-[62px] shrink-0 border-t-2 border-[#e6e6e6] bg-[#f9fafc] text-2xl leading-8 whitespace-nowrap text-[#666]">
      {pages.map((name) => (
        <button
          key={name}
          type="button"
          onClick={() => setPage(name)}
          className={clsx('min-w-[202px] shrink-0 border-r-2 border-[#e6e6e6] px-[29px]', page === name && 'bg-[#1747f6] text-white')}
        >
          {name}
        </button>
      ))}
      <button type="button" aria-label="新增页面" className="grid flex-1 place-items-center pt-1 text-[#222]">
        <Icon className="size-4" box="0 0 24 24">
          {plusIcon}
        </Icon>
      </button>
      <button type="button" className="flex w-[160px] shrink-0 items-center gap-1.5 bg-[#d8d8d8] pl-4 text-white">
        <Icon className="size-6" box="0 0 24 24">
          <path d="M8 22a11 11 0 1 1 12-3M13 5l-5 7h5l-2 6M14 22v-4M18 22v-7M22 23v-5" {...stroke(1.500)} />
        </Icon>
        分析结果
      </button>
      <span className="w-24 shrink-0 border-r-2 border-[#e6e6e6] pl-4 leading-[58px]">100%</span>
      <div className="flex w-[290px] shrink-0 items-center justify-between border-r-2 border-[#e6e6e6] px-[18px] text-[#8c8c8c]">
        <button type="button" aria-label="缩小" className="h-1 w-5 bg-[#8c8c8c]" />
        <input
          type="range"
          aria-label="缩放"
          value={zoom}
          onChange={(e) => setZoom(Number(e.target.value))}
          className="h-8 w-[170px] appearance-none border-x-12 border-white bg-transparent [&::-webkit-slider-runnable-track]:mx-1.5 [&::-webkit-slider-runnable-track]:h-2 [&::-webkit-slider-runnable-track]:bg-[#c9c9c9] [&::-webkit-slider-thumb]:-mt-3 [&::-webkit-slider-thumb]:size-8 [&::-webkit-slider-thumb]:appearance-none [&::-webkit-slider-thumb]:rounded-full [&::-webkit-slider-thumb]:border-4 [&::-webkit-slider-thumb]:border-[#8c8c8c] [&::-webkit-slider-thumb]:bg-white"
        />
        <button type="button" aria-label="放大">
          <Icon className="size-5" box="0 0 20 20">
            <path d="M0 10h20M10 0v20" {...stroke(3)} />
          </Icon>
        </button>
      </div>
      <button type="button" aria-label="适应宽度" className="grid w-[50px] shrink-0 place-items-center border-r-2 border-[#e6e6e6] text-[#8c8c8c]">
        <Icon className="size-7" box="0 0 28 28">
          <path d="M1.500 6V1.500h25V6M1.500 22v4.500h25V22" {...stroke(3)} />
          <path d="M0 14l7-5v3.500h5v3H7V19zM28 14l-7-5v3.500h-5v3h5V19z" />
        </Icon>
      </button>
      <button type="button" aria-label="全屏" className="grid w-12 shrink-0 place-items-center text-[#8c8c8c]">
        <Icon className="size-7" box="0 0 28 28">
          <path d="M1.500 9V1.500H9M19 1.500h7.500V9M26.500 19v7.500H19M9 26.500H1.500V19" {...stroke(3)} />
          <path d="M9 9h10v10H9z" />
        </Icon>
      </button>
    </footer>
  );
}

/* ---------- report settings ---------- */

function Section({ title, action, className, children }: { title: string; action?: ReactNode; className: string; children: ReactNode }) {
  return (
    <section className={clsx('border-b-2 border-[#cacaca] pr-4 pl-[18px]', className)}>
      <div className="flex h-20 items-center">
        <Chevron />
        <h3 className="ml-[19px] flex-1 font-semibold">{title}</h3>
        {action}
      </div>
      {children}
    </section>
  );
}

function Checkbox({ id }: { id: string }) {
  return (
    <span className="grid size-8">
      <input id={id} type="checkbox" defaultChecked className="peer size-8 appearance-none rounded-sm bg-white checked:bg-[#1747f6] [grid-area:1/1]" />
      <Icon className="pointer-events-none size-8 text-white [grid-area:1/1]" box="0 0 32 32">
        <path d="M8 15l6 7L26 10" {...stroke(3.5)} />
      </Icon>
    </span>
  );
}

function Select({ id, options }: { id: string; options: string[] }) {
  return (
    <span className="relative block">
      <select id={id} className="block h-14 w-[170px] appearance-none rounded-sm border-2 border-[#cacaca] bg-white pr-4 text-center text-2xl leading-8 text-[#262626]">
        {options.map((o) => (
          <option key={o}>{o}</option>
        ))}
      </select>
      <Chevron className="pointer-events-none absolute top-5 right-[18px] h-4 w-6" width={1.5} />
    </span>
  );
}

function Segmented({ options, initial }: { options: { label: string; width: string }[]; initial: string }) {
  const [value, setValue] = useState(initial);
  return (
    <div className="flex h-[58px] overflow-hidden rounded-md border-2 border-[#e3e3e3] bg-[#f9fafc] shadow-sm">
      {options.map((o, i) => (
        <button
          key={o.label}
          type="button"
          onClick={() => setValue(o.label)}
          className={clsx(
            'shrink-0 whitespace-nowrap',
            o.width,
            i > 0 && 'border-l-2 border-[#e0e0e0]',
            value === o.label && 'border-[#1747f6] bg-[#1747f6] text-white',
          )}
        >
          {o.label}
        </button>
      ))}
    </div>
  );
}

function NumberField({ id, label, initial }: { id: string; label: string; initial: number }) {
  const [value, setValue] = useState(initial);
  return (
    <div className="flex h-[54px] w-[174px] items-center rounded-sm border-2 border-[#cacaca] bg-white pl-3.5">
      <label htmlFor={id} className="shrink-0">
        {label}
      </label>
      <input
        id={id}
        type="text"
        value={value}
        onChange={(e) => setValue(Number(e.target.value) || 0)}
        className="ml-4 w-0 flex-1 outline-none"
      />
      <span className="flex h-full w-8 flex-col border-l-2 border-[#cacaca] text-[#8c8c8c]">
        <button type="button" aria-label="增加" onClick={() => setValue(value + 1)} className="grid flex-1 place-items-center border-b-2 border-[#cacaca]">
          <Chevron className="h-3 w-[18px] rotate-180" width={2} />
        </button>
        <button type="button" aria-label="减少" onClick={() => setValue(value - 1)} className="grid flex-1 place-items-center">
          <Chevron className="h-3 w-[18px]" width={2} />
        </button>
      </span>
    </div>
  );
}

function Swatch({ className }: { className: string }) {
  return (
    <span className={clsx('flex items-end justify-end bg-[#f2f2f2]', className)}>
      <Icon className="size-4 text-[#979797]" box="0 0 16 16">
        <path d="M16 0v16H0z" />
      </Icon>
    </span>
  );
}

const themes = [
  { name: '亮白色', style: 'bg-white text-[#cacaca]' },
  { name: '暗黑色', style: 'bg-[#262626] text-white' },
  { name: '星空紫', style: 'bg-[#7040ff] text-white' },
  { name: '薄荷绿', style: 'bg-[#20c4be] text-white' },
];

function SettingsPanel() {
  return (
    <aside className="flex w-[400px] shrink-0 flex-col border-l-2 border-[#cacaca] text-2xl leading-8 text-[#262626]">
      <h2 className="grid h-[72px] place-items-center border-b-2 border-[#cacaca] bg-white pt-1 text-[28px] font-semibold">报告设置</h2>
      <div className="grid h-[74px] grid-cols-2 bg-white text-[28px]">
        <button type="button" className="border-b-4 border-[#1747f6] pt-1 text-[#4d4d4d]">样式</button>
        <button type="button" className="border-b-2 border-[#cacaca] pt-0.5 text-[#4d4d4d]">数据</button>
      </div>

      <Section title="主题风格" className="relative pb-[14px]" action={<a href="#theme" className="text-[#1747f6]">导入主题</a>}>
        <div className="mt-4 grid grid-cols-2 gap-x-4">
          {themes.map((theme) => (
            <button key={theme.name} type="button" className="block">
              <span className={clsx('grid h-[100px] place-items-center border-2 border-[#cacaca] pt-7', theme.style)}>
                <Icon className="h-10 w-[88px]" box="0 0 88 40">
                  <path d="M3 3v34M17 17v20M31 3v34M44 33v4M58 21v16M71 9v28M84 21v16" {...stroke(6)} strokeLinecap="round" />
                </Icon>
              </span>
              <span className="block pb-0.5 leading-[56px]">{theme.name}</span>
            </button>
          ))}
        </div>
        <div className="flex h-2.5 justify-center gap-[18px] pr-2.5">
          <i className="size-2.5 rounded-full bg-[#4d4d4d]" />
          <i className="size-2.5 rounded-full bg-[#d3d3d3]" />
        </div>
        <button type="button" aria-label="上一组主题" className="absolute top-[225px] left-2.5 text-[#979797]">
          <Icon className="h-4 w-2.5" box="0 0 10 16">
            <path d="M10 0v16L0 8z" />
          </Icon>
        </button>
        <button type="button" aria-label="下一组主题" className="absolute top-[225px] right-1.5">
          <Icon className="h-4 w-2.5" box="0 0 10 16">
            <path d="M0 0v16l10-8z" />
          </Icon>
        </button>
      </Section>

      <button type="button" className="flex h-[81px] items-center justify-between border-b-2 border-[#cacaca] pr-[22px] pl-[18px]">
        编辑控件默认样式
        <Icon className="h-5 w-3" box="0 0 12 20">
          <path d="M2 2l8 8-8 8" {...stroke(3.500)} />
        </Icon>
      </button>

      <div className="flex h-[82px] items-center justify-between border-b-2 border-[#cacaca] pr-4 pl-[18px]">
        页面背景
        <button type="button" aria-label="页面背景颜色" className="rounded-sm border-2 border-[#cacaca] bg-white p-1">
          <Swatch className="h-11 w-[104px]" />
        </button>
      </div>

      <Section title="页面尺寸" className="pb-[49px]">
        <Segmented
          initial="自定义"
          options={[
            { label: '标准', width: 'w-[77px]' },
            { label: '宽幅', width: 'w-20' },
            { label: '移动端', width: 'w-[102px]' },
            { label: '自定义', width: 'flex-1' },
          ]}
        />
        <div className="mt-4 flex justify-between">
          <NumberField id="page-width" label="宽度" initial={1440} />
          <NumberField id="page-height" label="高度" initial={810} />
        </div>
      </Section>

      <Section title="页面阅览效果" className="pb-8">
        <div className="flex h-14 items-center justify-between">
          <label htmlFor="page-position">页面位置</label>
          <Select id="page-position" options={['默认', '居中']} />
        </div>
        <div className="flex h-16 items-center justify-between">
          <label htmlFor="page-shadow">页面阴影</label>
          <Checkbox id="page-shadow" />
        </div>
        <div className="flex h-14 items-center justify-between">
          <label htmlFor="outer-background">页面外区域背景</label>
          <Select id="outer-background" options={['自定义', '默认']} />
        </div>
        <button type="button" className="mt-4 flex h-14 w-full items-center justify-between rounded-sm border-2 border-[#cacaca] bg-white pr-1 pl-4">
          外区域背景
          <Swatch className="h-11 w-[104px]" />
        </button>
      </Section>

      <Section title="默认缩放" className="pb-[30px]">
        <Segmented
          initial="100%"
          options={[
            { label: '100%', width: 'w-[84px]' },
            { label: '自适应宽度', width: 'w-[136px]' },
            { label: '自适应窗口', width: 'flex-1' },
          ]}
        />
      </Section>

      <div className="flex h-[82px] items-center justify-between border-b-2 border-[#cacaca] px-4">
        <label htmlFor="guides" className="font-semibold">辅助线</label>
        <Checkbox id="guides" />
      </div>
      <div className="border-b-2 border-[#cacaca] px-4 pb-[26px]">
        <div className="flex h-20 items-center justify-between">
          <label htmlFor="step" className="font-semibold">图表控件移动步长10像素</label>
          <Checkbox id="step" />
        </div>
        <p className="pl-0.5 leading-6 text-[#a6a6a6]">按住shift键可1像素步长微调移动</p>
      </div>
    </aside>
  );
}

/* ---------- data model ---------- */

type FieldKind = 'group' | 'text' | 'number' | 'date';

const dimensions: [FieldKind, string][] = [
  ['group', '订单'], ['text', '产品_ID'], ['text', '产品名称'], ['date', '发货日期'], ['text', '国家'], ['text', '子类别'], ['text', '客户_ID'],
  ['text', '客户名称'], ['text', '类别'], ['text', '细分'], ['number', '行_ID'], ['text', '订单ID'], ['date', '订单日期'],
];

const measures: [FieldKind, string][] = [
  ['group', '订单'], ['number', '利润'], ['number', '折扣'], ['number', '数量'], ['number', '销售额'], ['group', '自定义度量'],
  ['number', '1天之内发货的占比'], ['number', '人均单量-地区'], ['number', '人均单量-子类别'], ['number', '值'], ['number', '利润-省'],
  ['number', '利润率-产品名称'], ['number', '利润率-地区'],
];

function FieldTree({ fields, accent }: { fields: [FieldKind, string][]; accent: string }) {
  return (
    <ul>
      {fields.map(([kind, name]) => (
        <li key={name} className={clsx('flex h-14 items-center', kind === 'group' ? 'pl-[35px]' : 'pl-[42px]')}>
          {kind === 'group' && <Chevron className="mr-4 h-3 w-[18px]" width={3.5} />}
          {kind === 'text' && <span className={clsx('w-11 font-[Roboto] text-sm', accent)}>ABC</span>}
          {kind === 'number' && <span className={clsx('w-11 text-lg', accent)}>0.2</span>}
          {kind === 'date' && (
            <Icon className={clsx('mr-5 size-6', accent)} box="0 0 24 24">
              <path fillRule="evenodd" d="M0 5q0-2 2-2h2V0h5v3h6V0h5v3h2q2 0 2 2v17q0 2-2 2H2q-2 0-2-2zM2 9v13h20V9z" />
            </Icon>
          )}
          {name}
        </li>
      ))}
    </ul>
  );
}

function DataPanel() {
  return (
    <aside className="flex w-[398px] shrink-0 flex-col border-l-2 border-[#cacaca] text-2xl leading-8 text-[#262626]">
      <div className="flex h-[72px] shrink-0 items-center border-b-2 border-[#cacaca] bg-white pt-0.5 pr-5 pl-4">
        <button type="button" aria-label="收起面板" className="text-[#979797]">
          <PanelToggle side="right" />
        </button>
        <h2 className="flex-1 text-center text-[28px] font-semibold">数据模型</h2>
        <button type="button" aria-label="更多操作" className="text-[#979797]">
          <Icon className="h-6 w-3" box="0 0 12 24">
            <circle cx="6" cy="3" r="2.500" />
            <circle cx="6" cy="12" r="2.500" />
            <circle cx="6" cy="21" r="2.500" />
          </Icon>
        </button>
      </div>
      <div className="border-b-2 border-[#cacaca] pt-[19px] pr-[30px] pb-5 pl-8">
        <div className="relative">
          <select aria-label="数据模型" className="block h-[58px] w-full appearance-none rounded-md border-2 border-[#e0e0e0] bg-[#f9fafc] pr-4 text-center shadow-sm">
            <option>订单(2)</option>
          </select>
          <Chevron className="pointer-events-none absolute top-5 right-4 h-4 w-6" width={1.5} />
        </div>
        <label className="mt-[19px] flex h-14 items-center rounded-sm border-2 border-[#cacaca] bg-white pl-3 text-[#979797]">
          <Icon className="size-7" box="0 0 28 28">
            <circle cx="11" cy="11" r="9" {...stroke(3)} />
            <path d="M17 18l9 9" {...stroke(4)} />
          </Icon>
          <input type="search" aria-label="搜索字段" placeholder="搜索字段" className="ml-2 w-[240px] outline-none placeholder:text-[#a6a6a6]" />
        </label>
      </div>

      <div className="flex h-[72px] shrink-0 items-center pr-[30px] pl-8 text-[#979797]">
        <h3 className="flex-1 font-semibold text-[#262626]">维度</h3>
        <Icon className="size-6" box="0 0 24 24">
          <path d="M12 1a11 11 0 1 0 .1 0M12 1v22M1 12h22M3 6.500h18M3 17.500h18M12 1q-11 11 0 22M12 1q11 11 0 22" {...stroke(1.500)} />
        </Icon>
        <Icon className="mr-3 ml-2 h-2.5 w-3.5" box="0 0 14 10">
          <path d="M0 0h14L7 10z" />
        </Icon>
        <button type="button" aria-label="新增维度">
          <Icon className="size-6" box="0 0 24 24">{plusIcon}</Icon>
        </button>
      </div>
      <div className="relative h-[696px] shrink-0 overflow-hidden">
        <FieldTree fields={dimensions} accent="text-[#4f93e0]" />
        <i className="absolute top-0 right-0 h-[262px] w-[13px] rounded-full bg-[#b4b4b4]" />
      </div>
      <div className="flex h-[19px] shrink-0 items-end justify-center border-b-2 border-[#cacaca]">
        <span className="grid h-[13px] w-20 place-items-center border-2 border-b-0 border-[#cacaca]">
          <i className="h-0.5 w-[60px] bg-[#cacaca]" />
        </span>
      </div>

      <div className="flex h-[70px] shrink-0 items-center pr-[30px] pl-8">
        <h3 className="flex-1 font-semibold">度量</h3>
        <button type="button" aria-label="新增度量" className="text-[#979797]">
          <Icon className="size-6" box="0 0 24 24">{plusIcon}</Icon>
        </button>
      </div>
      <div className="relative mb-3.5 min-h-0 flex-1 overflow-hidden">
        <FieldTree fields={measures} accent="text-[#3dbf9c]" />
        <i className="absolute top-0 right-0 h-[346px] w-[13px] rounded-full bg-[#b4b4b4]" />
      </div>
    </aside>
  );
}

export default function App() {
  return (
    <div className="flex h-screen flex-col overflow-hidden bg-[#f5f5f5] font-['Liberation_Sans','Noto_Sans_CJK_SC',sans-serif]">
      <Header />
      <div className="flex min-h-0 flex-1">
        <Rail />
        <main className="relative flex min-w-0 flex-1 flex-col">
          <ActionBar />
          <div className="mr-3.5 min-h-0 flex-1 overflow-hidden pl-[50px]">
            <Dashboard />
          </div>
          <div className="h-3.5 shrink-0">
            <i className="block h-3.5 w-[2014px] rounded-full bg-[#adadad]" />
          </div>
          <PageTabs />
          <i className="absolute top-[90px] right-0 bottom-[110px] w-3.5 rounded-full bg-[#adadad]" />
        </main>
        <SettingsPanel />
        <DataPanel />
      </div>
    </div>
  );
}
